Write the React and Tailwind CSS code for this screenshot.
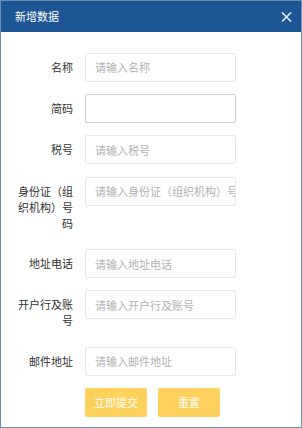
import React from "react";

const SC = '"Noto Sans CJK SC", "Noto Sans", sans-serif';

const rows = [
  { label: "名称", ph: "请输入名称" },
  { label: "简码", ph: "", dark: true },
  { label: "税号", ph: "请输入税号" },
  { label: "身份证（组织机构）号码", ph: "请输入身份证（组织机构）号码" },
  { label: "地址电话", ph: "请输入地址电话" },
  { label: "开户行及账号", ph: "请输入开户行及账号" },
  { label: "邮件地址", ph: "请输入邮件地址" },
];

export default function App() {
  return (
    <div
      className="w-[302px] h-[428px] border border-[#6d8cab] bg-white flex flex-col overflow-hidden"
      style={{ fontFamily: SC }}
    >
      <div className="h-[31px] shrink-0 bg-[#1d5595] flex items-center justify-between pl-[14px] pr-[9px]">
        <span className="text-[11px] text-white leading-none">新增数据</span>
        <svg width="11" height="10" viewBox="0 0 11 10" className="block">
          <path d="M1 0.5 L10 9.5 M10 0.5 L1 9.5" stroke="#e4ecf5" strokeWidth="1.6" />
        </svg>
      </div>
      <div className="flex flex-col gap-[12.4px] pt-[20.5px] pl-[12px]">
        {rows.map((r, i) => (
          <div key={i} className="flex items-start">
            <div className="w-[60px] text-right text-[11px] leading-[16px] py-[6px] text-[#333]">
              {r.label}
            </div>
            <input
              readOnly
              placeholder={r.ph}
              className={`ml-[12px] w-[151px] h-[29px] rounded-[2px] border bg-white pl-[9px] text-[11px] outline-none placeholder:text-[#b2b2b2] ${
                r.dark ? "border-[#cfcfcf]" : "border-[#e8e8e8]"
              }`}
              style={{ fontFamily: SC }}
            />
          </div>
        ))}
        <div className="flex pl-[72px] gap-[11px]">
          <button className="w-[62px] h-[29px] rounded-[2px] bg-[#fdd15c] text-white text-[11px]">
            立即提交
          </button>
          <button className="w-[62px] h-[29px] rounded-[2px] bg-[#fdd15c] text-white text-[11px]">
            重置
          </button>
        </div>
      </div>
    </div>
  );
}
